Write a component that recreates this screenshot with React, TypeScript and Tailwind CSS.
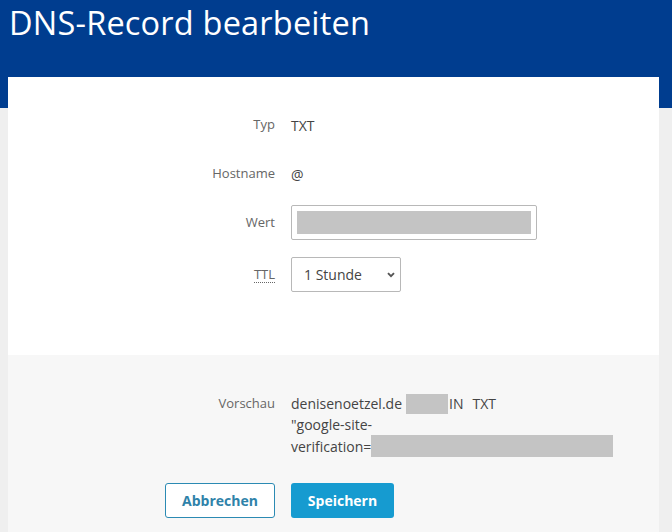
import { ReactNode } from 'react'

function Row({ label, children, className }: { label: ReactNode; children: ReactNode; className: string }) {
  return (
    <div className={`grid grid-cols-[267px_1fr] gap-x-4 items-center ${className}`}>
      <div className="text-right text-[#666]">{label}</div>
      <div className="text-[#444] text-[14px]">{children}</div>
    </div>
  )
}

export default function App() {
  return (
    <div className="min-h-screen bg-[#efefef] font-['Open_Sans',sans-serif] text-[13px]">
      <div className="h-[108px] bg-[#003d8f] px-[9px] pt-[3px]">
        <h1 className="text-white text-[32.5px] leading-[40px] tracking-[0.2px] font-['Open_Sans',sans-serif]">DNS-Record bearbeiten</h1>
      </div>

      <div className="-mt-[31px] ml-[8px] w-[651px]">
        <div className="bg-white pt-[28px] pb-[63px]">
          <Row label="Typ" className="h-[40px]">TXT</Row>
          <Row label="Hostname" className="h-[40px] mt-[9px]">@</Row>
          <Row label="Wert" className="h-[35px] mt-[11px]">
            <div className="w-[246px] h-[35px] border border-[#b8b8b8] rounded-[2px] p-[5px]">
              <div className="h-full bg-[#c4c4c4]" />
            </div>
          </Row>
          <Row
            label={<span className="border-b border-dotted border-[#666] leading-[16px] inline-block">TTL</span>}
            className="h-[35px] mt-[17px]"
          >
            <div className="w-[110px] h-[35px] border border-[#b8b8b8] rounded-[2px] flex items-center justify-between pl-[12px] pr-[5px] text-[14px] text-[#444]">
              <span>1 Stunde</span>
              <svg width="8" height="6" viewBox="0 0 8 6" fill="none">
                <path d="M1 1.2l3 3 3-3" stroke="#555" strokeWidth="1.9" />
              </svg>
            </div>
          </Row>
        </div>

        <div className="bg-[#f7f7f7] pt-[38px] pb-[14px]">
          <div className="grid grid-cols-[267px_1fr] gap-x-4 leading-[21px]">
            <div className="text-right text-[#666]">Vorschau</div>
            <div className="text-[#444] text-[14px]">
              <div className="flex items-center">
                <span>denisenoetzel.de</span>
                <span className="inline-block w-[42px] h-[20px] bg-[#c4c4c4] ml-[4px] mr-[1px]" />
                <span>IN</span>
                <span className="ml-[9px]">TXT</span>
              </div>
              <div>"google-site-</div>
              <div className="flex items-center">
                <span>verification=</span>
                <span className="inline-block w-[242px] h-[22px] bg-[#c4c4c4]" />
              </div>
            </div>
          </div>

          <div className="grid grid-cols-[267px_1fr] gap-x-4 mt-[26px]">
            <div className="flex justify-end">
              <button className="w-[110px] h-[35px] border border-[#2b8ab3] rounded-[3px] bg-white text-[#2f82a9] font-bold text-[14px]">
                Abbrechen
              </button>
            </div>
            <div>
              <button className="w-[103px] h-[35px] rounded-[3px] bg-[#169bd0] text-white font-bold text-[14px]">
                Speichern
              </button>
            </div>
          </div>
        </div>
      </div>
    </div>
  )
}
